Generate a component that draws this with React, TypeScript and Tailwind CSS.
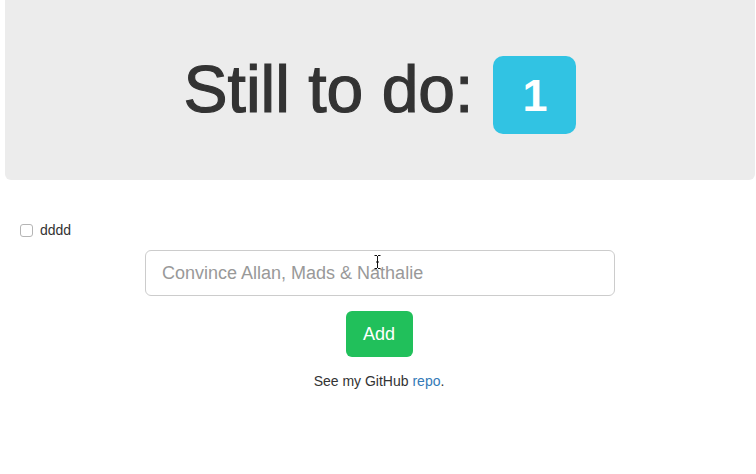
import React, { useState } from "react";

const App: React.FC = () => {
  const [draft, setDraft] = useState<string>("");
  const [done, setDone] = useState<boolean>(false);

  return (
    <div className="relative min-h-[474px] w-[756px] bg-white font-['Liberation_Sans',Arial,sans-serif] text-[#333]">
      <div className="ml-[5px] flex h-[180px] w-[750px] items-start justify-center gap-[20px] rounded-b-[6px] bg-[#ececec] pt-[53px]">
        <h1 className="text-[66px] leading-[1.1] font-normal text-[#333] [-webkit-text-stroke:1.2px_#333]">Still to do:</h1>
        <span className="mt-[3px] flex h-[78px] w-[83px] items-center justify-center rounded-[10px] bg-[#31c3e3] pt-[2px] text-[45px] font-bold text-white">
          1
        </span>
      </div>

      <div className="ml-[20px] mt-[40px] flex h-[20px] items-center gap-[7px] text-[14px]">
        <input
          type="checkbox"
          checked={done}
          onChange={(e) => setDone(e.target.checked)}
          className="h-[13px] w-[13px] appearance-none rounded-[3px] border border-[#b5b5b5] bg-white"
        />
        <span>dddd</span>
      </div>

      <div className="ml-[5px] flex w-[750px] flex-col items-center">
        <input
          value={draft}
          onChange={(e) => setDraft(e.target.value)}
          placeholder="Convince Allan, Mads & Nathalie"
          className="mt-[10px] h-[46px] w-[470px] rounded-[6px] border border-[#ccc] px-[16px] text-[18px] text-[#555] outline-none placeholder:text-[#999]"
        />
        <button className="mt-[15px] mr-[2px] h-[46px] w-[67px] rounded-[6px] bg-[#21c05b] text-[18px] text-white">Add</button>
        <p className="mt-[14px] mr-[2px] text-[14px] leading-[20px]">
          See my GitHub <a className="text-[#337ab7]">repo</a>.
        </p>
      </div>

      <svg className="absolute left-[374px] top-[255px]" width="7" height="14" viewBox="0 0 7 14">
        <path d="M0.5 0.5h2.5M4 0.5h2.5M3.5 1v12M0.5 13.5h2.5M4 13.5h2.5M2 7h3" stroke="#111" strokeWidth="1" fill="none" />
      </svg>
    </div>
  );
};

export default App;
